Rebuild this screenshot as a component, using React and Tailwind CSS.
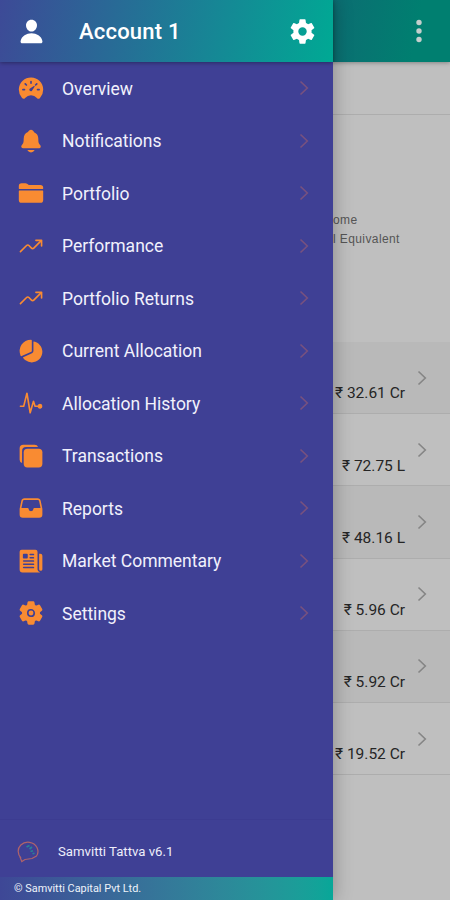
import { IoPerson, IoSettings, IoSettingsSharp, IoSpeedometer, IoNotifications, IoFolder, IoTrendingUp, IoPieChart, IoPulse, IoCopy, IoFileTray, IoNewspaper } from 'react-icons/io5';

const menu = [
  ['Overview', IoSpeedometer],
  ['Notifications', IoNotifications],
  ['Portfolio', IoFolder],
  ['Performance', IoTrendingUp],
  ['Portfolio Returns', IoTrendingUp],
  ['Current Allocation', IoPieChart],
  ['Allocation History', IoPulse],
  ['Transactions', IoCopy],
  ['Reports', IoFileTray],
  ['Market Commentary', IoNewspaper],
  ['Settings', IoSettings],
];

const rows = ['₹ 32.61 Cr', '₹ 72.75 L', '₹ 48.16 L', '₹ 5.96 Cr', '₹ 5.92 Cr', '₹ 19.52 Cr'];

function Chevron({ className }) {
  return (
    <svg viewBox="0 0 10 16" className={className} fill="none" stroke="currentColor" strokeWidth="1.6">
      <path d="M1.5 1.5 8.3 8 1.5 14.5" />
    </svg>
  );
}

function Drawer() {
  return (
    <aside className="relative z-10 flex h-[900px] w-[333px] shrink-0 flex-col bg-[#3f4095] shadow-[0_0_18px_rgba(0,0,0,0.3)]">
      <header className="relative flex h-[62px] shrink-0 items-center bg-linear-[100deg,#3d4a97_0%,#00a994_100%] pl-[18px] pr-[17px] text-white shadow-[0_1px_4px_rgba(0,0,0,0.35)]">
        <IoPerson className="size-[27px]" />
        <h1 className="ml-[34px] mt-[2px] flex-1 text-[22px] font-medium leading-none tracking-[0.2px]">Account 1</h1>
        <IoSettingsSharp className="size-[27px]" />
      </header>
      <nav className="flex flex-col text-[17.5px] text-[#f1f1fc]">
        {menu.map(([label, Icon]) => (
          <a key={label} className="flex h-[52.5px] items-center pl-[18px] pr-[24px]">
            <Icon className="size-[26px] text-[#f98b32]" />
            <span className="ml-[18px] flex-1 pt-px">{label}</span>
            <Chevron className="h-4 w-[10px] text-[#78517f]" />
          </a>
        ))}
      </nav>
      <div className="mt-auto flex h-[58px] items-center border-t border-[#3c3c91] pl-[17px] pt-[7px] text-[13.2px] text-[#eeeefa]">
        <svg viewBox="0 0 22 22" className="size-[22px]" fill="none" strokeWidth="1.2">
          <path d="M4 17C.2 13 .3 7.500 3.800 4 8.500-.5 17 .5 20 6.500c1.300 3 1 6.500-.5 8.500L15 17.500 8 18.500 4.800 20.500 2.800 15.500" stroke="#b0636a" />
          <path d="m9.500 6 3-1.500m0 3.500 2.500-2m-1.500 4.500 2.500-.8m-.5 3 2-.5" stroke="#288397" strokeWidth="1.700" />
        </svg>
        <span className="ml-[19px]">Samvitti Tattva v6.1</span>
      </div>
      <footer className="flex h-[23px] shrink-0 items-center bg-linear-to-r from-[#3e4796] to-[#07a798] pl-[14px] pt-[2px] text-[10.900px] text-[#eef4fb]">
        © Samvitti Capital Pvt Ltd.
      </footer>
    </aside>
  );
}

function Page() {
  return (
    <main className="flex min-w-0 flex-1 flex-col bg-[#bfbfbf] text-[#252525]">
      <header className="flex h-[62px] shrink-0 items-center justify-end bg-linear-[100deg,#0c6d72_0%,#007f70_70%] pr-[28px] shadow-[0_1px_4px_rgba(0,0,0,0.3)]">
        <svg viewBox="0 0 6 24" className="h-6 w-[6px]" fill="#c4cfcd">
          <circle cx="3" cy="3.500" r="2.700" />
          <circle cx="3" cy="12" r="2.700" />
          <circle cx="3" cy="20.500" r="2.700" />
        </svg>
      </header>
      <div className="h-[53px] shrink-0 border-b border-[#adadad]" />
      <section className="h-[227px] shrink-0 pt-[96px]">
        <div className="whitespace-nowrap font-['Liberation_Sans'] text-[12px] leading-[19px] tracking-[0.4px] text-[#555]">
          <p>ome</p>
          <p>l Equivalent</p>
        </div>
      </section>
      <ul>
        {rows.map((value) => (
          <li key={value} className="flex h-[72.2px] items-center justify-end border-b border-[#adadad] pr-[23px] odd:bg-[#b9b9b9]">
            <span className="mt-[33px] whitespace-nowrap text-[15.5px]">{value}</span>
            <Chevron className="ml-[12px] h-4 w-[10px] text-[#858585]" />
          </li>
        ))}
      </ul>
    </main>
  );
}

export default function App() {
  return (
    <div className="flex h-[900px] w-[450px] overflow-hidden font-[Roboto,'Noto_Sans',sans-serif]">
      <Drawer />
      <Page />
    </div>
  );
}
